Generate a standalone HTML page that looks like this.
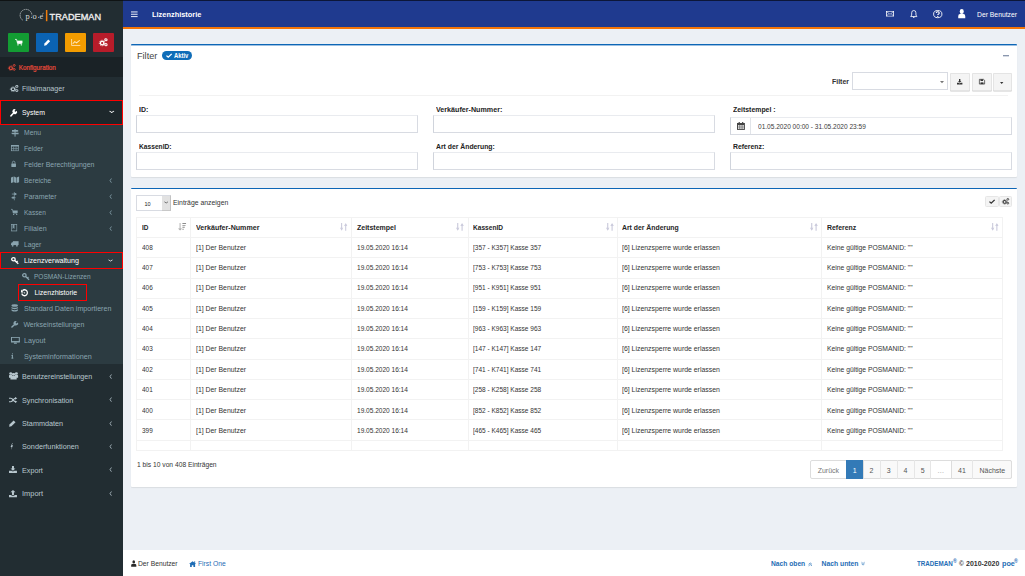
<!DOCTYPE html>
<html><head><meta charset="utf-8">
<style>
html,body{margin:0;padding:0;width:1025px;height:576px;overflow:hidden;background:#ecf0f5;font-family:"Liberation Sans",sans-serif;}
.a{position:absolute;box-sizing:border-box;}
.t{position:absolute;white-space:pre;transform-origin:0 0;}
svg{position:absolute;overflow:visible;}
</style></head><body>
<!-- top dark line -->
<div class="a" style="left:0;top:0;width:123px;height:1px;background:#0f1314"></div>
<div class="a" style="left:123px;top:0;width:902px;height:1px;background:#0c1638"></div>
<!-- sidebar -->
<div class="a" style="left:0;top:1px;width:123px;height:575px;background:#222d32"></div>
<div class="a" style="left:0;top:57px;width:123px;height:20px;background:#1a2226"></div>
<div class="a" style="left:0;top:100px;width:123px;height:25px;background:#1e282c;border:1px solid #f00"></div>
<div class="a" style="left:0;top:125px;width:123px;height:239px;background:#2c3b41"></div>
<div class="a" style="left:0;top:252px;width:123px;height:17px;border:1px solid #f00"></div>
<div class="a" style="left:18px;top:284px;width:69px;height:17px;border:1px solid #f00"></div>
<!-- logo -->
<svg style="left:0;top:0" width="123" height="28" viewBox="0 0 123 28">
<path d="M22.6 20.1 A5.9 5.9 0 1 1 31.9 15.3" fill="none" stroke="#a9aeb1" stroke-width="0.9" stroke-dasharray="1.6 0.5"/>
<text x="25.4" y="19" font-family="Liberation Serif" font-size="8.4" fill="#d8dadb">p</text>
<rect x="31" y="16.9" width="0.9" height="0.9" fill="#c8cbcd"/>
<text x="32.6" y="19" font-family="Liberation Serif" font-size="8.4" fill="#d8dadb">o</text>
<rect x="38.2" y="16.9" width="0.9" height="0.9" fill="#c8cbcd"/>
<text x="39.5" y="19" font-family="Liberation Serif" font-size="8.4" fill="#d8dadb">e</text>
<path d="M42.2 14.2 L43.6 13.2" stroke="#c8cbcd" stroke-width="0.7"/>
<rect x="45.9" y="10" width="1.5" height="11.2" fill="#f07d0c"/>
<text x="49.6" y="19.8" font-family="Liberation Sans" font-size="9.8" fill="#f0f0f0" stroke="#f0f0f0" stroke-width="0.35" textLength="51.5" lengthAdjust="spacingAndGlyphs">TRADEMAN</text>
</svg>

<div class="a" style="left:8px;top:33px;width:21px;height:19px;background:#139c33;border-radius:1px"></div>
<div class="a" style="left:36px;top:33px;width:22px;height:19px;background:#0b63b3;border-radius:1px"></div>
<div class="a" style="left:65px;top:33px;width:21px;height:19px;background:#f39c00;border-radius:1px"></div>
<div class="a" style="left:93px;top:33px;width:21px;height:19px;background:#b71c2a;border-radius:1px"></div>
<!-- header -->
<div class="a" style="left:123px;top:1px;width:902px;height:26px;background:#1f3a8f"></div>
<div class="a" style="left:123px;top:27px;width:902px;height:2px;background:#f47508"></div>
<!-- box 1 -->
<div class="a" style="left:131px;top:44px;width:886px;height:133px;background:#fff;border-top:1px solid #0d66b6;border-radius:1px;box-shadow:0 1px 1px rgba(0,0,0,0.08)"></div>
<div class="a" style="left:131px;top:45px;width:886px;height:1px;background:#9cc0e2"></div>
<div class="a" style="left:131px;top:189px;width:886px;height:1px;background:#9cc0e2"></div>
<div class="a" style="left:139px;top:95px;width:869px;height:1px;background:#f2f2f2"></div>
<div class="a" style="left:852px;top:72px;width:96px;height:18px;background:#fff;border:1px solid #d8dbe2"></div>
<div class="a" style="left:950px;top:73px;width:20px;height:18px;background:#f4f4f4;border:1px solid #e4e4e4;border-radius:1px;box-shadow:0 0.5px 0.5px #ccc"></div>
<div class="a" style="left:972px;top:73px;width:20px;height:18px;background:#f4f4f4;border:1px solid #e4e4e4;border-radius:1px;box-shadow:0 0.5px 0.5px #ccc"></div>
<div class="a" style="left:993px;top:73px;width:19px;height:18px;background:#f4f4f4;border:1px solid #e4e4e4;border-radius:1px;box-shadow:0 0.5px 0.5px #ccc"></div>
<div class="a" style="left:136px;top:115px;width:282px;height:18px;border:1px solid #d8dbe2;border-top-color:#e9ebef;border-left-color:#d0d4dc"></div>
<div class="a" style="left:433px;top:115px;width:282px;height:18px;border:1px solid #d8dbe2;border-top-color:#e9ebef;border-left-color:#d0d4dc"></div>
<div class="a" style="left:730px;top:117px;width:282px;height:18px;border:1px solid #d8dbe2;border-top-color:#e9ebef;border-left-color:#d0d4dc"></div>
<div class="a" style="left:750px;top:118px;width:1px;height:16px;background:#e1e4e9"></div>
<div class="a" style="left:136px;top:152px;width:282px;height:18px;border:1px solid #d8dbe2;border-top-color:#e9ebef;border-left-color:#d0d4dc"></div>
<div class="a" style="left:433px;top:152px;width:282px;height:18px;border:1px solid #d8dbe2;border-top-color:#e9ebef;border-left-color:#d0d4dc"></div>
<div class="a" style="left:730px;top:152px;width:282px;height:18px;border:1px solid #d8dbe2;border-top-color:#e9ebef;border-left-color:#d0d4dc"></div>
<!-- box 2 -->
<div class="a" style="left:131px;top:188px;width:886px;height:299px;background:#fff;border-top:1px solid #0d66b6;border-radius:1px;box-shadow:0 1px 1px rgba(0,0,0,0.08)"></div>
<div class="a" style="left:136px;top:195px;width:35px;height:16px;background:#fff;border:1px solid #d8dbe2"></div>
<div class="a" style="left:162px;top:195px;width:9px;height:16px;background:#e2e2e2;border-top:1px solid #d8dbe2;border-right:1px solid #c2c2c2;border-bottom:1px solid #c8c8c8"></div>
<div class="a" style="left:985px;top:195.5px;width:13.5px;height:11.5px;background:#f4f4f4;border:1px solid #e6e6e6;border-radius:1.5px"></div>
<div class="a" style="left:998.5px;top:195.5px;width:13.5px;height:11.5px;background:#f4f4f4;border:1px solid #e6e6e6;border-radius:1.5px"></div>
<!-- table grid -->
<div class="a" id="tbl" style="left:136px;top:217px;width:867px;height:234px;border:1px solid #f2f2f2"></div>
<div class="a" style="left:190px;top:217px;width:1px;height:234px;background:#f2f2f2"></div>
<div class="a" style="left:351px;top:217px;width:1px;height:234px;background:#f2f2f2"></div>
<div class="a" style="left:468px;top:217px;width:1px;height:234px;background:#f2f2f2"></div>
<div class="a" style="left:617px;top:217px;width:1px;height:234px;background:#f2f2f2"></div>
<div class="a" style="left:821px;top:217px;width:1px;height:234px;background:#f2f2f2"></div>
<div class="a" style="left:136px;top:237px;width:867px;height:1px;background:#f2f2f2"></div>
<div class="a" style="left:136px;top:257px;width:867px;height:1px;background:#f2f2f2"></div>
<div class="a" style="left:136px;top:278px;width:867px;height:1px;background:#f2f2f2"></div>
<div class="a" style="left:136px;top:298px;width:867px;height:1px;background:#f2f2f2"></div>
<div class="a" style="left:136px;top:318px;width:867px;height:1px;background:#f2f2f2"></div>
<div class="a" style="left:136px;top:338px;width:867px;height:1px;background:#f2f2f2"></div>
<div class="a" style="left:136px;top:359px;width:867px;height:1px;background:#f2f2f2"></div>
<div class="a" style="left:136px;top:379px;width:867px;height:1px;background:#f2f2f2"></div>
<div class="a" style="left:136px;top:399px;width:867px;height:1px;background:#f2f2f2"></div>
<div class="a" style="left:136px;top:419px;width:867px;height:1px;background:#f2f2f2"></div>
<div class="a" style="left:136px;top:440px;width:867px;height:1px;background:#f2f2f2"></div>
<!-- pagination -->
<div class="a" style="left:810px;top:460px;width:202px;height:19px;border:1px solid #ddd;border-radius:2px;background:#fff"></div>
<div class="a" style="left:863px;top:460px;width:68px;height:19px;background:#f9f9f9;border:1px solid #ddd"></div>
<div class="a" style="left:951px;top:460px;width:61px;height:19px;background:#f9f9f9;border:1px solid #ddd;border-radius:0 2px 2px 0"></div>
<div class="a" style="left:880px;top:460px;width:1px;height:19px;background:#e6e6e6"></div>
<div class="a" style="left:897px;top:460px;width:1px;height:19px;background:#e6e6e6"></div>
<div class="a" style="left:914px;top:460px;width:1px;height:19px;background:#e6e6e6"></div>
<div class="a" style="left:930px;top:460px;width:1px;height:19px;background:#e6e6e6"></div>
<div class="a" style="left:972px;top:460px;width:1px;height:19px;background:#e6e6e6"></div>
<div class="a" style="left:846px;top:460px;width:17px;height:19px;background:#337ab7"></div>
<!-- footer -->
<div class="a" style="left:123px;top:550px;width:902px;height:26px;background:#fff"></div>
<!-- badge -->
<div class="a" style="left:162px;top:51px;width:30px;height:9px;background:#0f6db8;border-radius:4.5px"></div>
<div class="a" style="left:1003px;top:55px;width:6px;height:1px;background:#8a97ae"></div>
<div class="a" style="left:1003px;top:56px;width:6px;height:1px;background:#d5dae3"></div>
<svg style="left:14.90px;top:38.90px" width="7.70" height="6.60" viewBox="0 0 16 16" preserveAspectRatio="none"><path d="M0 1h3.2l2.2 10h9" fill="none" stroke="#fff" stroke-width="1.8"/><rect x="4.5" y="4" width="11" height="6.5" fill="#fff"/><circle cx="6.2" cy="14.2" r="1.7" fill="#fff"/><circle cx="13.2" cy="14.2" r="1.7" fill="#fff"/></svg>
<svg style="left:43.60px;top:38.90px" width="6.50" height="6.80" viewBox="0 0 16 16" preserveAspectRatio="none"><path d="M0.3 15.7l0.9-5.4L10.6 0.9l4.5 4.5-9.4 9.4z" fill="#fff"/></svg>
<svg style="left:70.80px;top:38.90px" width="9.30" height="6.90" viewBox="0 0 16 16" preserveAspectRatio="none"><path d="M1 0v15h15" fill="none" stroke="#ffe9c4" stroke-width="1.6"/><path d="M3 11l3.5-5 3 3L15 3" fill="none" stroke="#ffe9c4" stroke-width="1.8"/></svg>
<svg style="left:99.20px;top:37.80px" width="8.70" height="8.40" viewBox="0 0 16 16" preserveAspectRatio="none"><circle cx="5.8" cy="9.6" r="3.3" fill="none" stroke="#fff" stroke-width="2.4"/><circle cx="5.8" cy="9.6" r="5.2" fill="none" stroke="#fff" stroke-width="1.6" stroke-dasharray="1.9 1.6"/><circle cx="12.8" cy="3.3" r="2.1" fill="none" stroke="#fff" stroke-width="1.9"/><circle cx="12.8" cy="12.7" r="2.1" fill="none" stroke="#fff" stroke-width="1.9"/></svg>
<svg style="left:7.80px;top:64.00px" width="7.80" height="6.80" viewBox="0 0 16 16" preserveAspectRatio="none"><circle cx="5.8" cy="9.6" r="3.3" fill="none" stroke="#e44a3a" stroke-width="2.4"/><circle cx="5.8" cy="9.6" r="5.2" fill="none" stroke="#e44a3a" stroke-width="1.6" stroke-dasharray="1.9 1.6"/><circle cx="12.8" cy="3.3" r="2.1" fill="none" stroke="#e44a3a" stroke-width="1.9"/><circle cx="12.8" cy="12.7" r="2.1" fill="none" stroke="#e44a3a" stroke-width="1.9"/></svg>
<svg style="left:9.50px;top:85.20px" width="8.50" height="7.00" viewBox="0 0 16 16" preserveAspectRatio="none"><circle cx="5.8" cy="9.6" r="3.3" fill="none" stroke="#b8c7ce" stroke-width="2.4"/><circle cx="5.8" cy="9.6" r="5.2" fill="none" stroke="#b8c7ce" stroke-width="1.6" stroke-dasharray="1.9 1.6"/><circle cx="12.8" cy="3.3" r="2.1" fill="none" stroke="#b8c7ce" stroke-width="1.9"/><circle cx="12.8" cy="12.7" r="2.1" fill="none" stroke="#b8c7ce" stroke-width="1.9"/></svg>
<svg style="left:9.50px;top:108.50px" width="7.30" height="7.60" viewBox="0 0 16 16" preserveAspectRatio="none"><path d="M2 14.5 L9 7.5" stroke="#fff" stroke-width="3.2" stroke-linecap="round"/><path d="M7.2 8.8 A4.6 4.6 0 0 1 12.5 1.2 L10 3.7 L10.6 5.4 L12.3 6 L14.8 3.5 A4.6 4.6 0 0 1 7.2 8.8Z" fill="#fff"/></svg>
<svg style="left:108.60px;top:110.20px" width="5.50" height="3.60" viewBox="0 0 16 16" preserveAspectRatio="none"><path d="M1.5 4.5L8 11l6.5-6.5" fill="none" stroke="#fff" stroke-width="3"/></svg>
<svg style="left:10.80px;top:128.50px" width="8.10" height="7.60" viewBox="0 0 16 16" preserveAspectRatio="none"><rect x="7" y="0" width="2" height="16" fill="#8aa4af"/><path d="M2 2h11l2 2l-2 2H2z" fill="#8aa4af"/><path d="M1 8h14v0l0 0v3H3l-2-1.5z" fill="#8aa4af" transform="translate(0,0)"/></svg>
<svg style="left:10.80px;top:145.00px" width="7.70" height="6.10" viewBox="0 0 16 16" preserveAspectRatio="none"><rect x="0.8" y="0.8" width="14.4" height="14.4" fill="none" stroke="#8aa4af" stroke-width="1.6"/><rect x="0" y="0" width="16" height="4" fill="#8aa4af"/><path d="M5.5 4v11M10.5 4v11M1 9.5h14" stroke="#8aa4af" stroke-width="1.4"/></svg>
<svg style="left:10.80px;top:160.80px" width="5.30" height="5.90" viewBox="0 0 16 16" preserveAspectRatio="none"><path d="M4 7V4.5a4 4 0 0 1 8 0V7" fill="none" stroke="#8aa4af" stroke-width="2.2"/><rect x="1" y="7" width="14" height="9" rx="1" fill="#8aa4af"/></svg>
<svg style="left:10.80px;top:176.40px" width="8.10" height="7.60" viewBox="0 0 16 16" preserveAspectRatio="none"><path d="M0 3l5-2v12l-5 2z M6 1l4 2v12l-4-2z M11 3l5-2v12l-5 2z" fill="#8aa4af"/></svg>
<svg style="left:10.50px;top:192.40px" width="6.70" height="8.30" viewBox="0 0 16 16" preserveAspectRatio="none"><path d="M8 0v16" stroke="#8aa4af" stroke-width="1.4"/><path d="M2 4h12M1 11h10" stroke="#8aa4af" stroke-width="1.6"/><circle cx="10" cy="4" r="2.2" fill="#8aa4af"/><circle cx="5" cy="11" r="2.2" fill="#8aa4af"/></svg>
<svg style="left:11.30px;top:209.40px" width="6.90" height="6.00" viewBox="0 0 16 16" preserveAspectRatio="none"><path d="M0 1h3.2l2.2 10h9" fill="none" stroke="#8aa4af" stroke-width="1.8"/><rect x="4.5" y="4" width="11" height="6.5" fill="#8aa4af"/><circle cx="6.2" cy="14.2" r="1.7" fill="#8aa4af"/><circle cx="13.2" cy="14.2" r="1.7" fill="#8aa4af"/></svg>
<svg style="left:11.30px;top:224.40px" width="6.20" height="7.30" viewBox="0 0 16 16" preserveAspectRatio="none"><rect x="1" y="0.8" width="14" height="14.4" fill="none" stroke="#8aa4af" stroke-width="1.6"/><path d="M4 1v10l2.5-2 2.5 2V1z" fill="#8aa4af" opacity="0.9"/></svg>
<svg style="left:11.30px;top:240.80px" width="7.60" height="5.90" viewBox="0 0 16 16" preserveAspectRatio="none"><rect x="4" y="0.5" width="12" height="10.5" fill="#8aa4af"/><path d="M0 11V6.5L2 3.5h3V11z" fill="#8aa4af"/><circle cx="3.5" cy="13.2" r="2.2" fill="#8aa4af"/><circle cx="12.5" cy="13.2" r="2.2" fill="#8aa4af"/></svg>
<svg style="left:10.80px;top:257.00px" width="7.80" height="7.00" viewBox="0 0 16 16" preserveAspectRatio="none"><circle cx="5" cy="5.2" r="3.6" fill="none" stroke="#fff" stroke-width="2.8"/><path d="M7.6 8l7.4 7.4M11.2 11.6l2.4-2.4" stroke="#fff" stroke-width="2.6"/></svg>
<svg style="left:108.00px;top:259.00px" width="5.00" height="3.00" viewBox="0 0 16 16" preserveAspectRatio="none"><path d="M1.5 4.5L8 11l6.5-6.5" fill="none" stroke="#fff" stroke-width="3"/></svg>
<svg style="left:21.70px;top:273.00px" width="7.60" height="7.00" viewBox="0 0 16 16" preserveAspectRatio="none"><circle cx="5" cy="5.2" r="3.6" fill="none" stroke="#8aa4af" stroke-width="2.8"/><path d="M7.6 8l7.4 7.4M11.2 11.6l2.4-2.4" stroke="#8aa4af" stroke-width="2.6"/></svg>
<svg style="left:21.40px;top:288.50px" width="7.20" height="7.60" viewBox="0 0 16 16" preserveAspectRatio="none"><path d="M3.2 3.6A6.3 6.3 0 1 1 1.8 9.5" fill="none" stroke="#fff" stroke-width="2.8"/><path d="M0 1.2v6h6z" fill="#fff"/><circle cx="8" cy="8" r="1.4" fill="#fff"/></svg>
<svg style="left:10.80px;top:304.40px" width="7.40" height="7.70" viewBox="0 0 16 16" preserveAspectRatio="none"><ellipse cx="8" cy="3" rx="7" ry="2.6" fill="#8aa4af"/><path d="M1 5.5c0 3 14 3 14 0v3c0 3-14 3-14 0z" fill="#8aa4af"/><path d="M1 10.5c0 3 14 3 14 0v2.5c0 3.5-14 3.5-14 0z" fill="#8aa4af"/></svg>
<svg style="left:10.80px;top:321.40px" width="7.40" height="6.60" viewBox="0 0 16 16" preserveAspectRatio="none"><path d="M2 14.5 L9 7.5" stroke="#8aa4af" stroke-width="3.2" stroke-linecap="round"/><path d="M7.2 8.8 A4.6 4.6 0 0 1 12.5 1.2 L10 3.7 L10.6 5.4 L12.3 6 L14.8 3.5 A4.6 4.6 0 0 1 7.2 8.8Z" fill="#8aa4af"/></svg>
<svg style="left:10.80px;top:336.70px" width="8.80" height="7.30" viewBox="0 0 16 16" preserveAspectRatio="none"><rect x="0.9" y="0.9" width="14.2" height="10" fill="none" stroke="#8aa4af" stroke-width="1.8"/><rect x="0" y="9" width="16" height="2.5" fill="#8aa4af"/><path d="M6 12h4l1 3H5z" fill="#8aa4af"/></svg>
<svg style="left:11.25px;top:353.00px" width="2.75" height="5.60" viewBox="0 0 16 16" preserveAspectRatio="none"><rect x="2.5" y="5.5" width="8" height="2.5" fill="#8aa4af"/><rect x="5" y="5.5" width="6" height="9.5" fill="#8aa4af"/><rect x="2.5" y="13.2" width="11" height="2.8" fill="#8aa4af"/><circle cx="8" cy="2.2" r="2.2" fill="#8aa4af"/></svg>
<svg style="left:108.80px;top:178.00px" width="3.40" height="5.20" viewBox="0 0 16 16" preserveAspectRatio="none"><path d="M11.5 1.5L5 8l6.5 6.5" fill="none" stroke="#8aa4af" stroke-width="3"/></svg>
<svg style="left:108.80px;top:194.00px" width="3.40" height="5.20" viewBox="0 0 16 16" preserveAspectRatio="none"><path d="M11.5 1.5L5 8l6.5 6.5" fill="none" stroke="#8aa4af" stroke-width="3"/></svg>
<svg style="left:108.80px;top:210.00px" width="3.40" height="5.20" viewBox="0 0 16 16" preserveAspectRatio="none"><path d="M11.5 1.5L5 8l6.5 6.5" fill="none" stroke="#8aa4af" stroke-width="3"/></svg>
<svg style="left:108.80px;top:226.00px" width="3.40" height="5.20" viewBox="0 0 16 16" preserveAspectRatio="none"><path d="M11.5 1.5L5 8l6.5 6.5" fill="none" stroke="#8aa4af" stroke-width="3"/></svg>
<svg style="left:9.40px;top:372.00px" width="9.10" height="7.60" viewBox="0 0 16 16" preserveAspectRatio="none"><circle cx="8" cy="5" r="3" fill="#b8c7ce"/><circle cx="3" cy="3" r="2.6" fill="#b8c7ce"/><circle cx="13" cy="3" r="2.6" fill="#b8c7ce"/><path d="M2.5 16v-4.5a3.5 3.5 0 0 1 3.5-3.5h4a3.5 3.5 0 0 1 3.5 3.5V16z" fill="#b8c7ce"/><path d="M0 12V8a2 2 0 0 1 2-2h3.5v6z M16 12V8a2 2 0 0 0-2-2h-3.5v6z" fill="#b8c7ce"/></svg>
<svg style="left:9.20px;top:396.70px" width="8.30" height="6.10" viewBox="0 0 16 16" preserveAspectRatio="none"><path d="M0 3.5h3.5c4 0 5 9 9 9h1 M0 12.5h3.5c4 0 5-9 9-9h1" fill="none" stroke="#b8c7ce" stroke-width="2.8"/><path d="M11.5 0l4.5 3.5-4.5 3.5zM11.5 9l4.5 3.5-4.5 3.5z" fill="#b8c7ce"/></svg>
<svg style="left:9.20px;top:419.90px" width="6.90" height="6.90" viewBox="0 0 16 16" preserveAspectRatio="none"><path d="M0.3 15.7l0.9-5.4L10.6 0.9l4.5 4.5-9.4 9.4z" fill="#b8c7ce"/></svg>
<svg style="left:9.90px;top:443.30px" width="3.60" height="6.90" viewBox="0 0 16 16" preserveAspectRatio="none"><path d="M10 0L2.5 9.5h5L4.5 16l9-10.5h-5L12 0z" fill="#b8c7ce"/></svg>
<svg style="left:9.25px;top:466.00px" width="7.95" height="6.90" viewBox="0 0 16 16" preserveAspectRatio="none"><path d="M6 0h4v6h3l-5 5-5-5h3z" fill="#b8c7ce"/><path d="M0 11h5l3 2 3-2h5v5H0z" fill="#b8c7ce"/></svg>
<svg style="left:9.25px;top:489.70px" width="7.95" height="7.30" viewBox="0 0 16 16" preserveAspectRatio="none"><path d="M8 0l5 5h-3v6H6V5H3z" fill="#b8c7ce"/><path d="M0 11h5v1.5h6V11h5v5H0z" fill="#b8c7ce"/></svg>
<svg style="left:109.10px;top:373.90px" width="3.40" height="5.20" viewBox="0 0 16 16" preserveAspectRatio="none"><path d="M11.5 1.5L5 8l6.5 6.5" fill="none" stroke="#b8c7ce" stroke-width="3"/></svg>
<svg style="left:109.10px;top:397.25px" width="3.40" height="5.20" viewBox="0 0 16 16" preserveAspectRatio="none"><path d="M11.5 1.5L5 8l6.5 6.5" fill="none" stroke="#b8c7ce" stroke-width="3"/></svg>
<svg style="left:109.10px;top:420.60px" width="3.40" height="5.20" viewBox="0 0 16 16" preserveAspectRatio="none"><path d="M11.5 1.5L5 8l6.5 6.5" fill="none" stroke="#b8c7ce" stroke-width="3"/></svg>
<svg style="left:109.10px;top:443.95px" width="3.40" height="5.20" viewBox="0 0 16 16" preserveAspectRatio="none"><path d="M11.5 1.5L5 8l6.5 6.5" fill="none" stroke="#b8c7ce" stroke-width="3"/></svg>
<svg style="left:109.10px;top:467.30px" width="3.40" height="5.20" viewBox="0 0 16 16" preserveAspectRatio="none"><path d="M11.5 1.5L5 8l6.5 6.5" fill="none" stroke="#b8c7ce" stroke-width="3"/></svg>
<svg style="left:109.10px;top:490.65px" width="3.40" height="5.20" viewBox="0 0 16 16" preserveAspectRatio="none"><path d="M11.5 1.5L5 8l6.5 6.5" fill="none" stroke="#b8c7ce" stroke-width="3"/></svg>
<svg style="left:130.90px;top:10.60px" width="6.60" height="6.50" viewBox="0 0 16 16" preserveAspectRatio="none"><rect x="0" y="1" width="16" height="2.6" fill="#dfe4f2"/><rect x="0" y="6.7" width="16" height="2.6" fill="#dfe4f2"/><rect x="0" y="12.4" width="16" height="2.6" fill="#dfe4f2"/></svg>
<svg style="left:886.00px;top:10.70px" width="8.00" height="6.20" viewBox="0 0 16 16" preserveAspectRatio="none"><rect x="0.8" y="0.8" width="14.4" height="12.4" fill="none" stroke="#fff" stroke-width="1.6"/><path d="M1 1.5l7 7 7-7M1 12.5l4.6-5M15 12.5l-4.6-5" fill="none" stroke="#fff" stroke-width="1.3"/></svg>
<svg style="left:909.60px;top:9.80px" width="7.60" height="8.10" viewBox="0 0 16 16" preserveAspectRatio="none"><path d="M8 1a4.5 4.5 0 0 1 4.5 4.5V10l2 3H1.5l2-3V5.5A4.5 4.5 0 0 1 8 1z" fill="none" stroke="#fff" stroke-width="1.7"/><circle cx="8" cy="14.5" r="1.5" fill="#fff"/></svg>
<svg style="left:932.80px;top:10.30px" width="9.50" height="8.20" viewBox="0 0 16 16" preserveAspectRatio="none"><circle cx="8" cy="8" r="7" fill="none" stroke="#fff" stroke-width="1.6"/><path d="M5.5 6a2.5 2.5 0 1 1 3.5 2.3c-.8.4-1 .9-1 1.7" fill="none" stroke="#fff" stroke-width="1.8"/><rect x="7" y="11.5" width="2" height="2" fill="#fff"/></svg>
<svg style="left:957.70px;top:8.50px" width="7.50" height="9.30" viewBox="0 0 16 16" preserveAspectRatio="none"><circle cx="8" cy="4.3" r="4.3" fill="#fff"/><path d="M0.5 16v-3.5a3.8 3.8 0 0 1 3.8-3.8h7.4a3.8 3.8 0 0 1 3.8 3.8V16z" fill="#fff"/></svg>
<svg style="left:165.80px;top:53.00px" width="6.20" height="5.20" viewBox="0 0 16 16" preserveAspectRatio="none"><path d="M1.2 8.2L5.8 13L14.8 2.6" fill="none" stroke="#fff" stroke-width="3.4"/></svg>
<svg style="left:939.80px;top:81.00px" width="4.00" height="2.20" viewBox="0 0 16 16" preserveAspectRatio="none"><path d="M0 0h16l-8 16z" fill="#777"/></svg>
<svg style="left:956.60px;top:79.00px" width="5.40" height="5.40" viewBox="0 0 16 16" preserveAspectRatio="none"><path d="M6 0h4v6h3l-5 5-5-5h3z" fill="#333"/><path d="M0 11h5l3 2 3-2h5v5H0z" fill="#333"/></svg>
<svg style="left:979.00px;top:79.00px" width="6.00" height="5.40" viewBox="0 0 16 16" preserveAspectRatio="none"><path d="M1 1h11l3 3v11H1z" fill="none" stroke="#333" stroke-width="2"/><rect x="4" y="1" width="7" height="5" fill="#333"/><rect x="4" y="10" width="8" height="5" fill="#333"/></svg>
<svg style="left:1000.40px;top:82.00px" width="3.40" height="2.00" viewBox="0 0 16 16" preserveAspectRatio="none"><path d="M0 0h16l-8 16z" fill="#333"/></svg>
<svg style="left:737.00px;top:121.90px" width="7.90" height="7.90" viewBox="0 0 16 16" preserveAspectRatio="none"><path d="M4.5 0v3.5M11.5 0v3.5" stroke="#444" stroke-width="2.4"/><rect x="0" y="2" width="16" height="14" fill="#444"/><rect x="2" y="6.5" width="3.2" height="3" fill="#fff"/><rect x="6.4" y="6.5" width="3.2" height="3" fill="#fff"/><rect x="10.8" y="6.5" width="3.2" height="3" fill="#fff"/><rect x="2" y="10.8" width="3.2" height="3" fill="#fff"/><rect x="6.4" y="10.8" width="3.2" height="3" fill="#fff"/><rect x="10.8" y="10.8" width="3.2" height="3" fill="#fff"/></svg>
<svg style="left:163.70px;top:201.30px" width="4.40" height="2.90" viewBox="0 0 16 16" preserveAspectRatio="none"><path d="M1.5 4.5L8 11l6.5-6.5" fill="none" stroke="#444" stroke-width="3"/></svg>
<svg style="left:989.20px;top:198.80px" width="6.10" height="5.20" viewBox="0 0 16 16" preserveAspectRatio="none"><path d="M1.2 8.2L5.8 13L14.8 2.6" fill="none" stroke="#333" stroke-width="3.4"/></svg>
<svg style="left:1001.50px;top:198.00px" width="7.25" height="6.50" viewBox="0 0 16 16" preserveAspectRatio="none"><circle cx="5.8" cy="9.6" r="3.3" fill="none" stroke="#333" stroke-width="2.4"/><circle cx="5.8" cy="9.6" r="5.2" fill="none" stroke="#333" stroke-width="1.6" stroke-dasharray="1.9 1.6"/><circle cx="12.8" cy="3.3" r="2.1" fill="none" stroke="#333" stroke-width="1.9"/><circle cx="12.8" cy="12.7" r="2.1" fill="none" stroke="#333" stroke-width="1.9"/></svg>
<svg style="left:178.00px;top:222.90px" width="8.30" height="7.60" viewBox="0 0 16 16" preserveAspectRatio="none"><path d="M4 0v13" stroke="#aaa" stroke-width="1.8"/><path d="M0 11.5h8l-4 4.5z" fill="#aaa"/><path d="M8.5 1h7M8.5 5h6M8.5 9h4.5M8.5 13h2.5" stroke="#8c8c8c" stroke-width="2"/></svg>
<svg style="left:340.00px;top:223.30px" width="7.30" height="7.80" viewBox="0 0 16 16" preserveAspectRatio="none"><path d="M3.5 0v14" stroke="#ccd" stroke-width="2.4"/><path d="M0 10l3.5 6 3.5-6z" fill="#ccd"/><path d="M12.5 16V2" stroke="#ccd" stroke-width="2.4"/><path d="M9 6l3.5-6 3.5 6z" fill="#ccd"/></svg>
<svg style="left:455.60px;top:223.30px" width="7.80" height="7.80" viewBox="0 0 16 16" preserveAspectRatio="none"><path d="M3.5 0v14" stroke="#ccd" stroke-width="2.4"/><path d="M0 10l3.5 6 3.5-6z" fill="#ccd"/><path d="M12.5 16V2" stroke="#ccd" stroke-width="2.4"/><path d="M9 6l3.5-6 3.5 6z" fill="#ccd"/></svg>
<svg style="left:605.60px;top:223.30px" width="7.80" height="7.80" viewBox="0 0 16 16" preserveAspectRatio="none"><path d="M3.5 0v14" stroke="#ccd" stroke-width="2.4"/><path d="M0 10l3.5 6 3.5-6z" fill="#ccd"/><path d="M12.5 16V2" stroke="#ccd" stroke-width="2.4"/><path d="M9 6l3.5-6 3.5 6z" fill="#ccd"/></svg>
<svg style="left:809.70px;top:223.30px" width="7.80" height="7.80" viewBox="0 0 16 16" preserveAspectRatio="none"><path d="M3.5 0v14" stroke="#ccd" stroke-width="2.4"/><path d="M0 10l3.5 6 3.5-6z" fill="#ccd"/><path d="M12.5 16V2" stroke="#ccd" stroke-width="2.4"/><path d="M9 6l3.5-6 3.5 6z" fill="#ccd"/></svg>
<svg style="left:990.90px;top:223.30px" width="7.50" height="7.80" viewBox="0 0 16 16" preserveAspectRatio="none"><path d="M3.5 0v14" stroke="#ccd" stroke-width="2.4"/><path d="M0 10l3.5 6 3.5-6z" fill="#ccd"/><path d="M12.5 16V2" stroke="#ccd" stroke-width="2.4"/><path d="M9 6l3.5-6 3.5 6z" fill="#ccd"/></svg>
<svg style="left:130.60px;top:560.30px" width="5.50" height="6.70" viewBox="0 0 16 16" preserveAspectRatio="none"><circle cx="8" cy="4.6" r="3.9" fill="#2a2a2a"/><path d="M0.5 16v-3.2a3.5 3.5 0 0 1 3.5-3.5h8a3.5 3.5 0 0 1 3.5 3.5V16z" fill="#2a2a2a"/></svg>
<svg style="left:188.60px;top:560.60px" width="7.20" height="6.00" viewBox="0 0 16 16" preserveAspectRatio="none"><path d="M8 0.5l8 7.2h-2.4V16H9.8v-5H6.2v5H2.4V7.7H0z" fill="#1f6db5"/><rect x="11.5" y="1" width="2.2" height="4" fill="#1f6db5"/></svg>
<svg style="left:807.50px;top:561.80px" width="4.50" height="4.10" viewBox="0 0 16 16" preserveAspectRatio="none"><path d="M2 9l6-5 6 5M2 15l6-5 6 5" fill="none" stroke="#1f6db5" stroke-width="2.4"/></svg>
<svg style="left:860.80px;top:561.80px" width="4.10" height="4.10" viewBox="0 0 16 16" preserveAspectRatio="none"><path d="M2 1l6 5 6-5M2 7l6 5 6-5" fill="none" stroke="#1f6db5" stroke-width="2.4"/></svg>
<span class="t" style="left:18.75px;top:64.000px;font-size:6.300px;line-height:7.56px;color:#e44a3a;-webkit-text-stroke:0.2px #e44a3a">Konfiguration</span>
<span class="t" style="left:22.00px;top:85.000px;font-size:7.096px;line-height:8.515px;color:#b8c7ce">Filialmanager</span>
<span class="t" style="left:22.00px;top:109.000px;font-size:6.898px;line-height:8.278px;color:#fff">System</span>
<span class="t" style="left:23.60px;top:129.000px;font-size:7.000px;line-height:8.4px;color:#8aa4af;transform:scaleX(0.9651)">Menu</span>
<span class="t" style="left:23.60px;top:145.000px;font-size:7.000px;line-height:8.4px;color:#8aa4af;transform:scaleX(0.9546)">Felder</span>
<span class="t" style="left:23.60px;top:161.000px;font-size:7.000px;line-height:8.4px;color:#8aa4af;transform:scaleX(0.9939)">Felder Berechtigungen</span>
<span class="t" style="left:23.60px;top:177.000px;font-size:7.000px;line-height:8.4px;color:#8aa4af;transform:scaleX(0.9845)">Bereiche</span>
<span class="t" style="left:23.60px;top:193.000px;font-size:7.000px;line-height:8.4px;color:#8aa4af;transform:scaleX(0.9945)">Parameter</span>
<span class="t" style="left:23.60px;top:209.000px;font-size:7.000px;line-height:8.4px;color:#8aa4af;transform:scaleX(0.9336)">Kassen</span>
<span class="t" style="left:23.60px;top:225.000px;font-size:7.000px;line-height:8.4px;color:#8aa4af;transform:scaleX(1.0189)">Filialen</span>
<span class="t" style="left:23.60px;top:241.000px;font-size:7.000px;line-height:8.4px;color:#8aa4af;transform:scaleX(0.9662)">Lager</span>
<span class="t" style="left:23.60px;top:257.000px;font-size:7.000px;line-height:8.4px;color:#fff;transform:scaleX(1.0151)">Lizenzverwaltung</span>
<span class="t" style="left:34.40px;top:273.000px;font-size:7.000px;line-height:8.4px;color:#8aa4af;transform:scaleX(0.9326)">POSMAN-Lizenzen</span>
<span class="t" style="left:34.40px;top:289.000px;font-size:7.000px;line-height:8.4px;color:#fff">Lizenzhistorie</span>
<span class="t" style="left:23.60px;top:305.000px;font-size:7.000px;line-height:8.4px;color:#8aa4af;transform:scaleX(1.0163)">Standard Daten importieren</span>
<span class="t" style="left:23.40px;top:321.000px;font-size:7.000px;line-height:8.4px;color:#8aa4af">Werkseinstellungen</span>
<span class="t" style="left:23.60px;top:337.000px;font-size:7.000px;line-height:8.4px;color:#8aa4af;transform:scaleX(1.0227)">Layout</span>
<span class="t" style="left:23.60px;top:353.000px;font-size:7.000px;line-height:8.4px;color:#8aa4af;transform:scaleX(1.0296)">Systeminformationen</span>
<span class="t" style="left:21.90px;top:373.000px;font-size:7.000px;line-height:8.4px;color:#b8c7ce;transform:scaleX(1.0133)">Benutzereinstellungen</span>
<span class="t" style="left:21.90px;top:397.000px;font-size:7.000px;line-height:8.4px;color:#b8c7ce;transform:scaleX(1.0289)">Synchronisation</span>
<span class="t" style="left:21.90px;top:420.000px;font-size:7.000px;line-height:8.4px;color:#b8c7ce;transform:scaleX(1.0355)">Stammdaten</span>
<span class="t" style="left:21.90px;top:443.000px;font-size:7.000px;line-height:8.4px;color:#b8c7ce;transform:scaleX(1.0349)">Sonderfunktionen</span>
<span class="t" style="left:21.90px;top:467.000px;font-size:7.000px;line-height:8.4px;color:#b8c7ce;transform:scaleX(1.0280)">Export</span>
<span class="t" style="left:21.90px;top:490.000px;font-size:7.000px;line-height:8.4px;color:#b8c7ce;transform:scaleX(1.0635)">Import</span>
<span class="t" style="left:151.50px;top:11.000px;font-size:7.300px;line-height:8.76px;color:#fff;transform:scaleX(1.0148);font-weight:bold">Lizenzhistorie</span>
<span class="t" style="left:976.70px;top:11.000px;font-size:7.000px;line-height:8.4px;color:#fff;transform:scaleX(0.9698)">Der Benutzer</span>
<span class="t" style="left:136.50px;top:51.000px;font-size:9.000px;line-height:10.8px;color:#444;transform:scaleX(1.0144)">Filter</span>
<span class="t" style="left:832.00px;top:78.000px;font-size:6.800px;line-height:8.16px;color:#333;transform:scaleX(1.0224);font-weight:bold">Filter</span>
<span class="t" style="left:138.80px;top:106.000px;font-size:6.500px;line-height:7.8px;color:#222;transform:scaleX(1.0722);font-weight:bold">ID:</span>
<span class="t" style="left:435.60px;top:106.000px;font-size:6.500px;line-height:7.8px;color:#222;transform:scaleX(1.0990);font-weight:bold">Verkäufer-Nummer:</span>
<span class="t" style="left:733.40px;top:106.000px;font-size:6.500px;line-height:7.8px;color:#222;transform:scaleX(1.0624);font-weight:bold">Zeitstempel :</span>
<span class="t" style="left:138.80px;top:143.000px;font-size:6.500px;line-height:7.8px;color:#222;transform:scaleX(1.0224);font-weight:bold">KassenID:</span>
<span class="t" style="left:435.60px;top:143.000px;font-size:6.500px;line-height:7.8px;color:#222;transform:scaleX(1.0505);font-weight:bold">Art der Änderung:</span>
<span class="t" style="left:733.40px;top:143.000px;font-size:6.500px;line-height:7.8px;color:#222;transform:scaleX(1.0531);font-weight:bold">Referenz:</span>
<span class="t" style="left:758.00px;top:123.000px;font-size:7.000px;line-height:8.4px;color:#3a3a3a;transform:scaleX(0.9356)">01.05.2020 00:00 - 31.05.2020 23:59</span>
<span class="t" style="left:144.40px;top:201.000px;font-size:5.500px;line-height:6.6px;color:#222">10</span>
<span class="t" style="left:172.70px;top:199.000px;font-size:7.000px;line-height:8.4px;color:#333;transform:scaleX(0.9798)">Einträge anzeigen</span>
<span class="t" style="left:141.65px;top:224.000px;font-size:7.000px;line-height:8.4px;color:#262626;transform:scaleX(0.9214);font-weight:bold">ID</span>
<span class="t" style="left:195.60px;top:224.000px;font-size:7.000px;line-height:8.4px;color:#262626;transform:scaleX(1.0121);font-weight:bold">Verkäufer-Nummer</span>
<span class="t" style="left:357.00px;top:224.000px;font-size:7.000px;line-height:8.4px;color:#262626;font-weight:bold">Zeitstempel</span>
<span class="t" style="left:473.40px;top:224.000px;font-size:7.000px;line-height:8.4px;color:#262626;transform:scaleX(0.9403);font-weight:bold">KassenID</span>
<span class="t" style="left:622.10px;top:224.000px;font-size:7.000px;line-height:8.4px;color:#262626;transform:scaleX(0.9785);font-weight:bold">Art der Änderung</span>
<span class="t" style="left:826.80px;top:224.000px;font-size:7.000px;line-height:8.4px;color:#262626;transform:scaleX(0.9873);font-weight:bold">Referenz</span>
<span class="t" style="left:141.60px;top:244.000px;font-size:6.800px;line-height:8.16px;color:#333;transform:scaleX(0.9429)">408</span>
<span class="t" style="left:195.80px;top:244.000px;font-size:7.000px;line-height:8.4px;color:#333;transform:scaleX(0.9810)">[1] Der Benutzer</span>
<span class="t" style="left:357.00px;top:244.000px;font-size:7.000px;line-height:8.4px;color:#333;transform:scaleX(0.9339)">19.05.2020 16:14</span>
<span class="t" style="left:473.40px;top:244.000px;font-size:7.000px;line-height:8.4px;color:#333;transform:scaleX(0.9321)">[357 - K357] Kasse 357</span>
<span class="t" style="left:622.10px;top:244.000px;font-size:7.000px;line-height:8.4px;color:#333;transform:scaleX(0.9866)">[6] Lizenzsperre wurde erlassen</span>
<span class="t" style="left:826.80px;top:244.000px;font-size:7.000px;line-height:8.4px;color:#333;transform:scaleX(0.9659)">Keine gültige POSMANID: &quot;&quot;</span>
<span class="t" style="left:141.60px;top:264.000px;font-size:6.800px;line-height:8.16px;color:#333;transform:scaleX(0.9429)">407</span>
<span class="t" style="left:195.80px;top:264.000px;font-size:7.000px;line-height:8.4px;color:#333;transform:scaleX(0.9810)">[1] Der Benutzer</span>
<span class="t" style="left:357.00px;top:264.000px;font-size:7.000px;line-height:8.4px;color:#333;transform:scaleX(0.9339)">19.05.2020 16:14</span>
<span class="t" style="left:473.40px;top:264.000px;font-size:7.000px;line-height:8.4px;color:#333;transform:scaleX(0.9321)">[753 - K753] Kasse 753</span>
<span class="t" style="left:622.10px;top:264.000px;font-size:7.000px;line-height:8.4px;color:#333;transform:scaleX(0.9866)">[6] Lizenzsperre wurde erlassen</span>
<span class="t" style="left:826.80px;top:264.000px;font-size:7.000px;line-height:8.4px;color:#333;transform:scaleX(0.9659)">Keine gültige POSMANID: &quot;&quot;</span>
<span class="t" style="left:141.60px;top:284.000px;font-size:6.800px;line-height:8.16px;color:#333;transform:scaleX(0.9429)">406</span>
<span class="t" style="left:195.80px;top:284.000px;font-size:7.000px;line-height:8.4px;color:#333;transform:scaleX(0.9810)">[1] Der Benutzer</span>
<span class="t" style="left:357.00px;top:284.000px;font-size:7.000px;line-height:8.4px;color:#333;transform:scaleX(0.9339)">19.05.2020 16:14</span>
<span class="t" style="left:473.40px;top:284.000px;font-size:7.000px;line-height:8.4px;color:#333;transform:scaleX(0.9321)">[951 - K951] Kasse 951</span>
<span class="t" style="left:622.10px;top:284.000px;font-size:7.000px;line-height:8.4px;color:#333;transform:scaleX(0.9866)">[6] Lizenzsperre wurde erlassen</span>
<span class="t" style="left:826.80px;top:284.000px;font-size:7.000px;line-height:8.4px;color:#333;transform:scaleX(0.9659)">Keine gültige POSMANID: &quot;&quot;</span>
<span class="t" style="left:141.60px;top:305.000px;font-size:6.800px;line-height:8.16px;color:#333;transform:scaleX(0.9429)">405</span>
<span class="t" style="left:195.80px;top:305.000px;font-size:7.000px;line-height:8.4px;color:#333;transform:scaleX(0.9810)">[1] Der Benutzer</span>
<span class="t" style="left:357.00px;top:305.000px;font-size:7.000px;line-height:8.4px;color:#333;transform:scaleX(0.9339)">19.05.2020 16:14</span>
<span class="t" style="left:473.40px;top:305.000px;font-size:7.000px;line-height:8.4px;color:#333;transform:scaleX(0.9321)">[159 - K159] Kasse 159</span>
<span class="t" style="left:622.10px;top:305.000px;font-size:7.000px;line-height:8.4px;color:#333;transform:scaleX(0.9866)">[6] Lizenzsperre wurde erlassen</span>
<span class="t" style="left:826.80px;top:305.000px;font-size:7.000px;line-height:8.4px;color:#333;transform:scaleX(0.9659)">Keine gültige POSMANID: &quot;&quot;</span>
<span class="t" style="left:141.60px;top:325.000px;font-size:6.800px;line-height:8.16px;color:#333;transform:scaleX(0.9429)">404</span>
<span class="t" style="left:195.80px;top:325.000px;font-size:7.000px;line-height:8.4px;color:#333;transform:scaleX(0.9810)">[1] Der Benutzer</span>
<span class="t" style="left:357.00px;top:325.000px;font-size:7.000px;line-height:8.4px;color:#333;transform:scaleX(0.9339)">19.05.2020 16:14</span>
<span class="t" style="left:473.40px;top:325.000px;font-size:7.000px;line-height:8.4px;color:#333;transform:scaleX(0.9321)">[963 - K963] Kasse 963</span>
<span class="t" style="left:622.10px;top:325.000px;font-size:7.000px;line-height:8.4px;color:#333;transform:scaleX(0.9866)">[6] Lizenzsperre wurde erlassen</span>
<span class="t" style="left:826.80px;top:325.000px;font-size:7.000px;line-height:8.4px;color:#333;transform:scaleX(0.9659)">Keine gültige POSMANID: &quot;&quot;</span>
<span class="t" style="left:141.60px;top:345.000px;font-size:6.800px;line-height:8.16px;color:#333;transform:scaleX(0.9429)">403</span>
<span class="t" style="left:195.80px;top:345.000px;font-size:7.000px;line-height:8.4px;color:#333;transform:scaleX(0.9810)">[1] Der Benutzer</span>
<span class="t" style="left:357.00px;top:345.000px;font-size:7.000px;line-height:8.4px;color:#333;transform:scaleX(0.9339)">19.05.2020 16:14</span>
<span class="t" style="left:473.40px;top:345.000px;font-size:7.000px;line-height:8.4px;color:#333;transform:scaleX(0.9321)">[147 - K147] Kasse 147</span>
<span class="t" style="left:622.10px;top:345.000px;font-size:7.000px;line-height:8.4px;color:#333;transform:scaleX(0.9866)">[6] Lizenzsperre wurde erlassen</span>
<span class="t" style="left:826.80px;top:345.000px;font-size:7.000px;line-height:8.4px;color:#333;transform:scaleX(0.9659)">Keine gültige POSMANID: &quot;&quot;</span>
<span class="t" style="left:141.60px;top:366.000px;font-size:6.800px;line-height:8.16px;color:#333;transform:scaleX(0.9429)">402</span>
<span class="t" style="left:195.80px;top:366.000px;font-size:7.000px;line-height:8.4px;color:#333;transform:scaleX(0.9810)">[1] Der Benutzer</span>
<span class="t" style="left:357.00px;top:366.000px;font-size:7.000px;line-height:8.4px;color:#333;transform:scaleX(0.9339)">19.05.2020 16:14</span>
<span class="t" style="left:473.40px;top:366.000px;font-size:7.000px;line-height:8.4px;color:#333;transform:scaleX(0.9321)">[741 - K741] Kasse 741</span>
<span class="t" style="left:622.10px;top:366.000px;font-size:7.000px;line-height:8.4px;color:#333;transform:scaleX(0.9866)">[6] Lizenzsperre wurde erlassen</span>
<span class="t" style="left:826.80px;top:366.000px;font-size:7.000px;line-height:8.4px;color:#333;transform:scaleX(0.9659)">Keine gültige POSMANID: &quot;&quot;</span>
<span class="t" style="left:141.60px;top:386.000px;font-size:6.800px;line-height:8.16px;color:#333;transform:scaleX(0.9429)">401</span>
<span class="t" style="left:195.80px;top:386.000px;font-size:7.000px;line-height:8.4px;color:#333;transform:scaleX(0.9810)">[1] Der Benutzer</span>
<span class="t" style="left:357.00px;top:386.000px;font-size:7.000px;line-height:8.4px;color:#333;transform:scaleX(0.9339)">19.05.2020 16:14</span>
<span class="t" style="left:473.40px;top:386.000px;font-size:7.000px;line-height:8.4px;color:#333;transform:scaleX(0.9321)">[258 - K258] Kasse 258</span>
<span class="t" style="left:622.10px;top:386.000px;font-size:7.000px;line-height:8.4px;color:#333;transform:scaleX(0.9866)">[6] Lizenzsperre wurde erlassen</span>
<span class="t" style="left:826.80px;top:386.000px;font-size:7.000px;line-height:8.4px;color:#333;transform:scaleX(0.9659)">Keine gültige POSMANID: &quot;&quot;</span>
<span class="t" style="left:141.60px;top:407.000px;font-size:6.800px;line-height:8.16px;color:#333;transform:scaleX(0.9429)">400</span>
<span class="t" style="left:195.80px;top:407.000px;font-size:7.000px;line-height:8.4px;color:#333;transform:scaleX(0.9810)">[1] Der Benutzer</span>
<span class="t" style="left:357.00px;top:407.000px;font-size:7.000px;line-height:8.4px;color:#333;transform:scaleX(0.9339)">19.05.2020 16:14</span>
<span class="t" style="left:473.40px;top:407.000px;font-size:7.000px;line-height:8.4px;color:#333;transform:scaleX(0.9321)">[852 - K852] Kasse 852</span>
<span class="t" style="left:622.10px;top:407.000px;font-size:7.000px;line-height:8.4px;color:#333;transform:scaleX(0.9866)">[6] Lizenzsperre wurde erlassen</span>
<span class="t" style="left:826.80px;top:407.000px;font-size:7.000px;line-height:8.4px;color:#333;transform:scaleX(0.9659)">Keine gültige POSMANID: &quot;&quot;</span>
<span class="t" style="left:141.60px;top:427.000px;font-size:6.800px;line-height:8.16px;color:#333;transform:scaleX(0.9429)">399</span>
<span class="t" style="left:195.80px;top:427.000px;font-size:7.000px;line-height:8.4px;color:#333;transform:scaleX(0.9810)">[1] Der Benutzer</span>
<span class="t" style="left:357.00px;top:427.000px;font-size:7.000px;line-height:8.4px;color:#333;transform:scaleX(0.9339)">19.05.2020 16:14</span>
<span class="t" style="left:473.40px;top:427.000px;font-size:7.000px;line-height:8.4px;color:#333;transform:scaleX(0.9321)">[465 - K465] Kasse 465</span>
<span class="t" style="left:622.10px;top:427.000px;font-size:7.000px;line-height:8.4px;color:#333;transform:scaleX(0.9866)">[6] Lizenzsperre wurde erlassen</span>
<span class="t" style="left:826.80px;top:427.000px;font-size:7.000px;line-height:8.4px;color:#333;transform:scaleX(0.9659)">Keine gültige POSMANID: &quot;&quot;</span>
<span class="t" style="left:136.60px;top:461.000px;font-size:7.000px;line-height:8.4px;color:#333;transform:scaleX(0.9557)">1 bis 10 von 408 Einträgen</span>
<span class="t" style="left:137.80px;top:560.000px;font-size:7.000px;line-height:8.4px;color:#333;transform:scaleX(0.9601)">Der Benutzer</span>
<span class="t" style="left:197.50px;top:560.000px;font-size:7.000px;line-height:8.4px;color:#1f6db5;transform:scaleX(0.9622)">First One</span>
<span class="t" style="left:173.80px;top:52.000px;font-size:6.300px;line-height:7.56px;color:#fff;transform:scaleX(0.9282);font-weight:bold">Aktiv</span>
<span class="t" style="left:817.70px;top:467.000px;font-size:7.000px;line-height:8.4px;color:#777">Zurück</span>
<span class="t" style="left:852.70px;top:467.000px;font-size:7.000px;line-height:8.4px;color:#fff">1</span>
<span class="t" style="left:869.60px;top:467.000px;font-size:7.000px;line-height:8.4px;color:#555">2</span>
<span class="t" style="left:886.70px;top:467.000px;font-size:7.000px;line-height:8.4px;color:#555">3</span>
<span class="t" style="left:903.60px;top:467.000px;font-size:7.000px;line-height:8.4px;color:#555">4</span>
<span class="t" style="left:920.70px;top:467.000px;font-size:7.000px;line-height:8.4px;color:#555">5</span>
<span class="t" style="left:937.20px;top:467.000px;font-size:7.000px;line-height:8.4px;color:#999">…</span>
<span class="t" style="left:958.00px;top:467.000px;font-size:7.000px;line-height:8.4px;color:#555">41</span>
<span class="t" style="left:979.50px;top:467.000px;font-size:7.000px;line-height:8.4px;color:#555">Nächste</span>
<span class="t" style="left:770.80px;top:560.000px;font-size:6.800px;line-height:8.16px;color:#1f6db5;transform:scaleX(0.9837);font-weight:bold">Nach oben</span>
<span class="t" style="left:821.50px;top:560.000px;font-size:6.800px;line-height:8.16px;color:#1f6db5;font-weight:bold">Nach unten</span>
<span class="t" style="left:917.30px;top:560.000px;font-size:6.800px;line-height:8.16px;color:#1f6db5;transform:scaleX(0.9175);font-weight:bold">TRADEMAN</span>
<span class="t" style="left:953.00px;top:558.000px;font-size:5.200px;line-height:6.24px;color:#1f6db5;font-weight:bold">®</span>
<span class="t" style="left:958.90px;top:560.000px;font-size:6.500px;line-height:7.8px;color:#333;font-weight:bold">©</span>
<span class="t" style="left:965.90px;top:560.000px;font-size:6.800px;line-height:8.16px;color:#333;transform:scaleX(1.0270);font-weight:bold">2010-2020</span>
<span class="t" style="left:1001.60px;top:560.000px;font-size:6.800px;line-height:8.16px;color:#1f6db5;transform:scaleX(1.0669);font-weight:bold">poe</span>
<span class="t" style="left:1014.00px;top:558.000px;font-size:5.200px;line-height:6.24px;color:#1f6db5;font-weight:bold">®</span>
</body></html>
